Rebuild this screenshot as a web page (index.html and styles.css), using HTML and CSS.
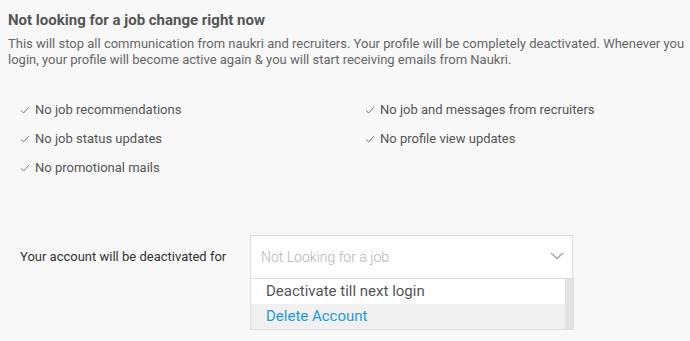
FILE: index.html
```html
<!DOCTYPE html>
<html>
<head>
<meta charset="utf-8">
<link rel="stylesheet" href="styles.css">
</head>
<body>
<div class="page">
  <h2 class="title">Not looking for a job change right now</h2>
  <p class="desc">This will stop all communication from naukri and recruiters. Your profile will be completely deactivated. Whenever you login, your profile will become active again &amp; you will start receiving emails from Naukri.</p>
  <ul class="checks">
    <li><svg class="tick" viewBox="0 0 10 8" width="10" height="8"><path d="M1 4.5 L3.6 7 L9 1" fill="none" stroke="#777" stroke-width="1"/></svg>No job recommendations</li>
    <li><svg class="tick" viewBox="0 0 10 8" width="10" height="8"><path d="M1 4.5 L3.6 7 L9 1" fill="none" stroke="#777" stroke-width="1"/></svg>No job and messages from recruiters</li>
    <li><svg class="tick" viewBox="0 0 10 8" width="10" height="8"><path d="M1 4.5 L3.6 7 L9 1" fill="none" stroke="#777" stroke-width="1"/></svg>No job status updates</li>
    <li><svg class="tick" viewBox="0 0 10 8" width="10" height="8"><path d="M1 4.5 L3.6 7 L9 1" fill="none" stroke="#777" stroke-width="1"/></svg>No profile view updates</li>
    <li><svg class="tick" viewBox="0 0 10 8" width="10" height="8"><path d="M1 4.5 L3.6 7 L9 1" fill="none" stroke="#777" stroke-width="1"/></svg>No promotional mails</li>
  </ul>
  <div class="form-row">
    <label class="label">Your account will be deactivated for</label>
    <div class="select">
      <div class="select-box">
        <span class="placeholder">Not Looking for a job</span>
        <svg class="chev" viewBox="0 0 14 8" width="14" height="8"><path d="M1 1 L7 6.5 L13 1" fill="none" stroke="#a0a0a0" stroke-width="1.3"/></svg>
      </div>
      <ul class="menu">
        <li class="opt">Deactivate till next login</li>
        <li class="opt active">Delete Account</li>
      </ul>
    </div>
  </div>
</div>
</body>
</html>
```
FILE: styles.css
```css
* { box-sizing: border-box; }
html, body { margin: 0; padding: 0; }
body {
  background: #f8f8f8;
  font-family: Roboto, "Liberation Sans", Arial, sans-serif;
  color: #555;
  width: 690px;
  height: 341px;
  overflow: hidden;
}
.page { padding: 10px 2px 0 8px; }
.title {
  margin: 0;
  font-size: 15px;
  font-weight: 700;
  line-height: 20px;
  color: #555;
}
.desc {
  margin: 6px 0 0 0;
  font-size: 13px;
  line-height: 16px;
  color: #666;
}
.checks {
  list-style: none;
  margin: 0;
  padding: 0 0 0 12px;
  display: grid;
  grid-template-columns: 345px 320px;
  row-gap: 13px;
  margin-top: 34px;
}
.checks li {
  display: flex;
  align-items: center;
  font-size: 13px;
  line-height: 16px;
  color: #555;
}
.tick { margin-right: 5px; flex: none; }
.form-row {
  display: flex;
  align-items: flex-start;
  margin-top: 59px;
  padding-left: 12px;
}
.label {
  width: 230px;
  font-size: 13px;
  color: #333;
  line-height: 44px;
}
.select { position: relative; width: 323px; }
.select-box {
  height: 44px;
  background: #fff;
  border: 1px solid #ddd;
  display: flex;
  align-items: center;
  justify-content: space-between;
  padding: 0 8px 0 10px;
}
.placeholder {
  font-size: 14px;
  font-weight: 300;
  color: #b5b5b5;
}
.chev { margin-top: -2px; }
.menu {
  position: absolute;
  left: 0;
  top: 43px;
  width: 323px;
  margin: 0;
  padding: 0;
  list-style: none;
  background: #fff;
  border: 1px solid #ddd;
  border-right: 8px solid #e2e2e2;
  box-shadow: 1px 0 0 #ddd;
}
.opt {
  height: 25px;
  line-height: 25px;
  padding-left: 15px;
  font-size: 15px;
  color: #555;
}
.opt.active { background: #f0f0f0; color: #1e9ad6; }
```
